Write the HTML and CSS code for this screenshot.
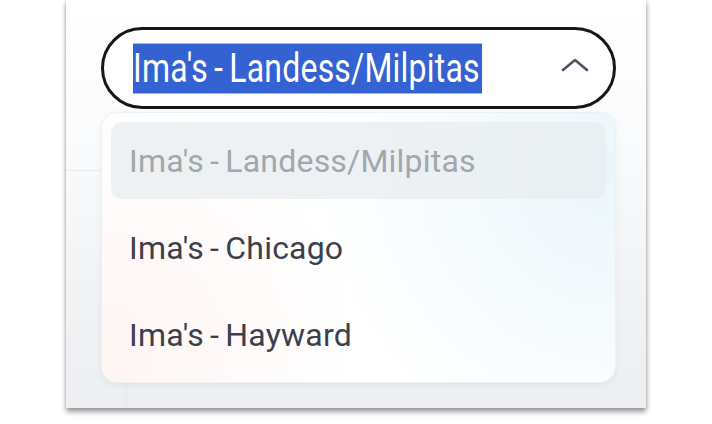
FILE: index.html
```html
<!DOCTYPE html>
<html lang="en">

<head>
	<meta charset="UTF-8">
	<title>Location picker</title>
	<link rel="stylesheet" href="styles.css">
</head>

<body>
	<div class="frame">
		<div class="backdrop">
			<div class="side"></div>
		</div>
		<div class="picker">
			<div class="select">
				<span class="current">Ima's - Landess/Milpitas</span>
				<svg class="chevron" width="28" height="16" viewBox="0 0 28 16">
					<polyline points="2,13 14,3 26,13" fill="none" stroke="#4b5563" stroke-width="2.6" stroke-linecap="round" stroke-linejoin="round" />
				</svg>
			</div>
			<ul class="options">
				<li class="active">Ima's - Landess/Milpitas</li>
				<li>Ima's - Chicago</li>
				<li>Ima's - Hayward</li>
			</ul>
		</div>
	</div>
</body>

</html>
```

FILE: styles.css
```css
:root {
	--ink: #3a414c;
	--muted: #a1a7ae;
	--select-blue: #3462d2;
}

* {
	padding: 0;
	margin: 0;
	box-sizing: border-box;
}

body {
	background: #fff;
	font-family: Roboto, "Liberation Sans", sans-serif;
	height: 424px;
	overflow: hidden;
}

.frame {
	position: relative;
	margin-left: 66px;
	width: 580px;
	height: 408px;
	background: linear-gradient(to bottom, #ffffff 0%, #fafbfc 35%, #f0f2f4 75%, #eceef1 100%);
	box-shadow: 0 4px 5px rgba(0, 0, 0, 0.38), 2px 0 4px rgba(0, 0, 0, 0.08), -1px 0 3px rgba(0, 0, 0, 0.06);
	padding: 27px 0 0 35px;
}

/* faint page content lying under the dropdown */
.backdrop {
	position: absolute;
	left: 0;
	top: 170px;
	bottom: 0;
}

.side {
	width: 61px;
	height: 100%;
	border-top: 1px solid #e9ecef;
	border-right: 1px solid #e3e6ea;
}

.picker {
	position: relative;
	width: 515px;
}

.select {
	height: 82px;
	border: 3px solid #14181d;
	border-radius: 41px;
	background: #fff;
	display: flex;
	align-items: center;
	justify-content: space-between;
	padding: 0 24px 0 29px;
}

.current {
	display: inline-block;
	font-size: 32px;
	line-height: 39px;
	color: #fff;
	background: var(--select-blue);
	transform: scaleY(1.28);
	word-spacing: -2px;
	letter-spacing: 0.2px;
	padding-right: 2px;
}

.chevron {
	margin-top: -6px;
}

.options {
	list-style: none;
	margin-top: 3px;
	height: 271px;
	padding: 9px;
	display: flex;
	flex-direction: column;
	gap: 10px;
	border-radius: 16px;
	border: 1px solid #eef1f3;
	background:
		radial-gradient(circle at 0% 90%, rgba(253, 238, 234, 0.6), rgba(253, 238, 234, 0) 45%),
		radial-gradient(circle at 100% 20%, rgba(228, 243, 250, 0.75), rgba(228, 243, 250, 0) 55%),
		#fff;
	box-shadow: 0 2px 6px rgba(20, 40, 60, 0.06);
}

.options li {
	height: 77px;
	display: flex;
	align-items: center;
	padding-left: 18px;
	font-size: 32px;
	word-spacing: -2px;
	letter-spacing: 0.2px;
	color: var(--ink);
	border-radius: 11px;
}

.options li.active {
	background: rgba(232, 236, 239, 0.75);
	color: var(--muted);
}
```
